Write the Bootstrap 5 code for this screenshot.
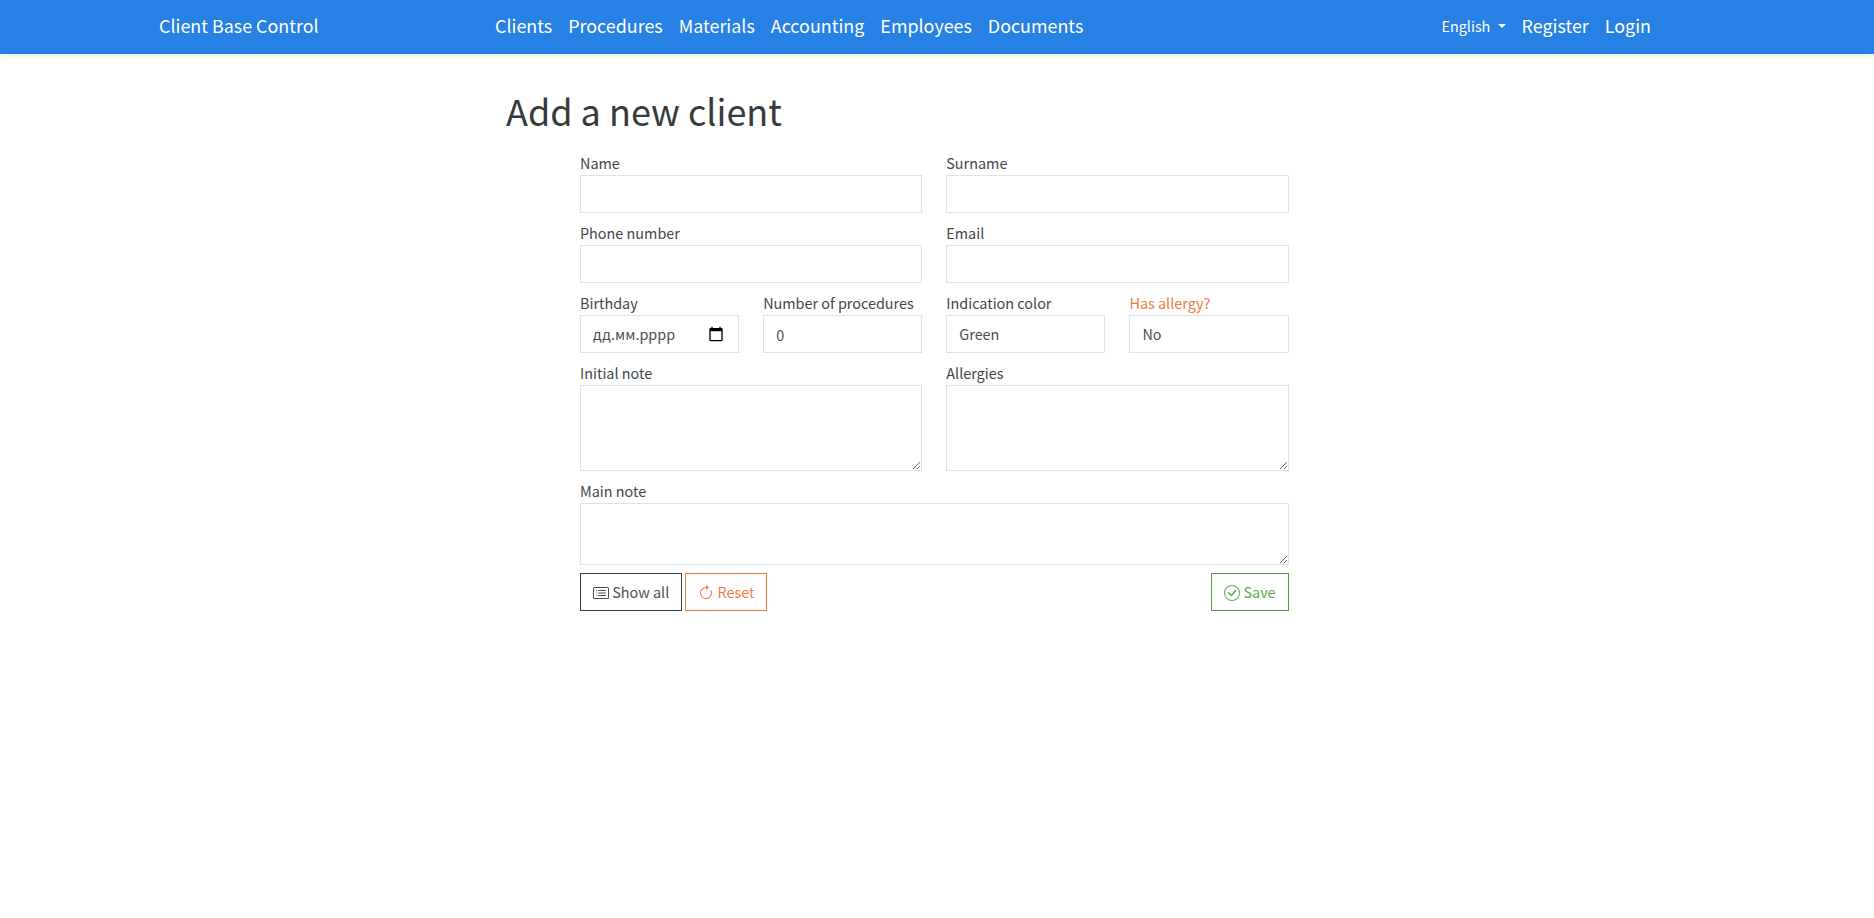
<!DOCTYPE html>
<html lang="en">

<head>
    <meta charset="UTF-8">
    <meta name="viewport" content="width=device-width, initial-scale=1.0">
    <title>Add a new client - Client Base Control</title>
    <link href="https://cdn.jsdelivr.net/npm/bootstrap@5.3.0/dist/css/bootstrap.min.css" rel="stylesheet">
    <style>
        :root {
            --primary-color: #2780e3;
            --text-color: #43464a;
            --input-color: #495057;
            --warning-color: #ee7a45;
            --warning-border: #e58036;
            --success-color: #5aab4c;
            --success-border: #4a9f3a;
            --border-color: #dee2e6;
        }

        body {
            font-family: "Noto Sans CJK SC", "Noto Sans", sans-serif;
            font-size: 14.4px;
            line-height: 24px;
            color: var(--text-color);
            background: #fff;
        }

        .top-bar {
            background-color: var(--primary-color);
            height: 54px;
            padding: 0 215px 3px 159px;
        }

        .top-bar .navbar-brand {
            color: #fff;
            font-size: 17.9px;
            line-height: 27px;
            padding: 0;
            margin: 0;
            width: 328px;
        }

        .top-bar .nav-link {
            color: #fff;
            font-size: 17.9px;
            line-height: 27px;
            padding: 0 8px;
        }

        .top-bar .nav-link.lang-link {
            font-size: 14.4px;
        }

        .top-bar .lang-link::after {
            margin-left: 0.5em;
        }

        .page-main {
            margin-left: 506px;
            width: 782.6px;
            padding-top: 32px;
        }

        .page-title {
            color: #373a3c;
            font-size: 36px;
            font-weight: 400;
            line-height: 48px;
            margin-bottom: 17px;
        }

        .client-form {
            margin-left: 74px;
        }

        .client-form .form-label {
            margin-bottom: 0;
            line-height: 24px;
        }

        .client-form .form-control {
            border-color: var(--border-color);
            border-radius: 0;
            color: var(--input-color);
            height: 38px;
            font-family: inherit;
            font-size: 14.4px;
        }

        .client-form .date-text {
            padding-top: 5px;
            padding-bottom: 7px;
        }

        .client-form textarea.note-tall {
            height: 86px;
        }

        .client-form textarea.note-short {
            height: 62px;
        }

        .allergy-label {
            color: var(--warning-color);
        }

        .date-icon {
            position: absolute;
            top: 11px;
            right: 15px;
        }

        .form-actions .btn {
            border-radius: 0;
            height: 38px;
            padding: 6px 12px;
            font-size: 14.4px;
            line-height: 24px;
        }

        .btn-show {
            --bs-btn-color: var(--input-color);
            --bs-btn-border-color: #373a3c;
            margin-right: 3px;
        }

        .btn-reset {
            --bs-btn-color: var(--warning-color);
            --bs-btn-border-color: var(--warning-border);
        }

        .btn-save {
            --bs-btn-color: var(--success-color);
            --bs-btn-border-color: var(--success-border);
        }

        .form-actions svg {
            vertical-align: -3px;
        }
    </style>
</head>

<body>
    <nav class="navbar navbar-expand-lg top-bar shadow-sm">
        <a class="navbar-brand" href="#">Client Base Control</a>
        <ul class="navbar-nav me-auto">
            <li class="nav-item"><a class="nav-link" href="#">Clients</a></li>
            <li class="nav-item"><a class="nav-link" href="#">Procedures</a></li>
            <li class="nav-item"><a class="nav-link" href="#">Materials</a></li>
            <li class="nav-item"><a class="nav-link" href="#">Accounting</a></li>
            <li class="nav-item"><a class="nav-link" href="#">Employees</a></li>
            <li class="nav-item"><a class="nav-link" href="#">Documents</a></li>
        </ul>
        <ul class="navbar-nav align-items-center">
            <li class="nav-item dropdown">
                <a class="nav-link lang-link dropdown-toggle" href="#" data-bs-toggle="dropdown">English</a>
                <ul class="dropdown-menu">
                    <li><a class="dropdown-item" href="#">English</a></li>
                    <li><a class="dropdown-item" href="#">Українська</a></li>
                </ul>
            </li>
            <li class="nav-item"><a class="nav-link" href="#">Register</a></li>
            <li class="nav-item"><a class="nav-link" href="#">Login</a></li>
        </ul>
    </nav>

    <main class="page-main">
        <h1 class="page-title">Add a new client</h1>
        <form class="client-form">
            <div class="row">
                <div class="col-6 mb-2">
                    <label class="form-label" for="name">Name</label>
                    <input type="text" class="form-control" id="name">
                </div>
                <div class="col-6 mb-2">
                    <label class="form-label" for="surname">Surname</label>
                    <input type="text" class="form-control" id="surname">
                </div>
                <div class="col-6 mb-2">
                    <label class="form-label" for="phone">Phone number</label>
                    <input type="text" class="form-control" id="phone">
                </div>
                <div class="col-6 mb-2">
                    <label class="form-label" for="email">Email</label>
                    <input type="email" class="form-control" id="email">
                </div>
                <div class="col-6">
                    <div class="row">
                        <div class="col-6 mb-2">
                            <label class="form-label" for="birthday">Birthday</label>
                            <div class="position-relative">
                                <input type="text" class="form-control date-text" id="birthday" value="дд.мм.рррр">
                                <svg class="date-icon" width="16" height="16" viewBox="0 0 24 24" fill="#000"><path d="M20 3h-1V1h-2v2H7V1H5v2H4c-1.1 0-2 .9-2 2v16c0 1.100.9 2 2 2h16c1.100 0 2-.9 2-2V5c0-1.100-.9-2-2-2zm0 18H4V8h16v13z"/></svg>
                            </div>
                        </div>
                        <div class="col-6 mb-2">
                            <label class="form-label" for="procedures">Number of procedures</label>
                            <input type="number" class="form-control" id="procedures" value="0">
                        </div>
                    </div>
                </div>
                <div class="col-6">
                    <div class="row">
                        <div class="col-6 mb-2">
                            <label class="form-label" for="color">Indication color</label>
                            <select class="form-control" id="color">
                                <option>Green</option>
                                <option>Yellow</option>
                                <option>Red</option>
                            </select>
                        </div>
                        <div class="col-6 mb-2">
                            <label class="form-label allergy-label" for="allergy">Has allergy?</label>
                            <select class="form-control" id="allergy">
                                <option>No</option>
                                <option>Yes</option>
                            </select>
                        </div>
                    </div>
                </div>
                <div class="col-6 mb-2">
                    <label class="form-label" for="initial-note">Initial note</label>
                    <textarea class="form-control note-tall d-block" id="initial-note"></textarea>
                </div>
                <div class="col-6 mb-2">
                    <label class="form-label" for="allergies">Allergies</label>
                    <textarea class="form-control note-tall d-block" id="allergies"></textarea>
                </div>
                <div class="col-12 mb-2">
                    <label class="form-label" for="main-note">Main note</label>
                    <textarea class="form-control note-short d-block" id="main-note"></textarea>
                </div>
            </div>
            <div class="form-actions d-flex">
                <button type="button" class="btn btn-outline-dark btn-show">
                    <svg width="16" height="16" viewBox="0 0 16 16" fill="currentColor"><path d="M14.500 3a.5.5 0 0 1 .5.5v9a.5.5 0 0 1-.5.5h-13a.5.5 0 0 1-.5-.5v-9a.5.5 0 0 1 .5-.5h13zm-13-1A1.500 1.500 0 0 0 0 3.500v9A1.500 1.500 0 0 0 1.500 14h13a1.500 1.500 0 0 0 1.500-1.500v-9A1.500 1.500 0 0 0 14.500 2h-13z"/><path d="M5 8a.5.5 0 0 1 .5-.5h7a.5.5 0 0 1 0 1h-7A.5.5 0 0 1 5 8zm0-2.500a.5.5 0 0 1 .5-.5h7a.5.5 0 0 1 0 1h-7a.5.5 0 0 1-.5-.5zm0 5a.5.5 0 0 1 .5-.5h7a.5.5 0 0 1 0 1h-7a.5.5 0 0 1-.5-.5zm-1-5a.5.5 0 1 1-1 0 .5.5 0 0 1 1 0zM4 8a.5.5 0 1 1-1 0 .5.5 0 0 1 1 0zm0 2.500a.5.5 0 1 1-1 0 .5.5 0 0 1 1 0z"/></svg>
                    Show all
                </button>
                <button type="reset" class="btn btn-outline-warning btn-reset">
                    <svg width="16" height="16" viewBox="0 0 16 16" fill="currentColor"><path fill-rule="evenodd" d="M8 3a5 5 0 1 0 4.546 2.914.5.5 0 0 1 .908-.417A6 6 0 1 1 8 2v1z"/><path d="M8 4.466V.534a.25.25 0 0 1 .41-.192l2.360 1.966c.12.1.12.284 0 .384L8.410 4.658A.25.25 0 0 1 8 4.466z"/></svg>
                    Reset
                </button>
                <button type="submit" class="btn btn-outline-success btn-save ms-auto">
                    <svg width="16" height="16" viewBox="0 0 16 16" fill="currentColor"><path d="M8 15A7 7 0 1 1 8 1a7 7 0 0 1 0 14zm0 1A8 8 0 1 0 8 0a8 8 0 0 0 0 16z"/><path d="M10.970 4.970a.235.235 0 0 0-.02.022L7.477 9.417 5.384 7.323a.75.75 0 0 0-1.060 1.060L6.970 11.030a.75.75 0 0 0 1.079-.02l3.992-4.990a.75.75 0 0 0-1.071-1.050z"/></svg>
                    Save
                </button>
            </div>
        </form>
    </main>

    <script src="https://cdn.jsdelivr.net/npm/bootstrap@5.3.0/dist/js/bootstrap.bundle.min.js"></script>
</body>

</html>
